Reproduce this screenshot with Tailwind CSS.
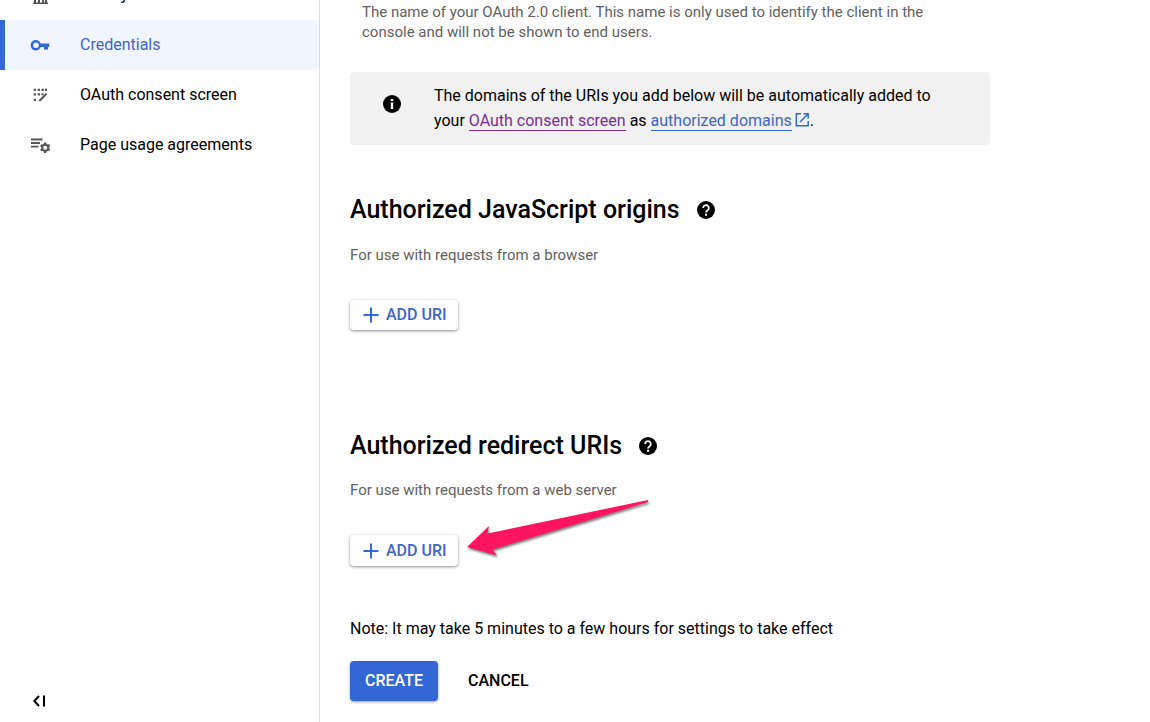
<!DOCTYPE html>
<html lang="en">
<head>
<meta charset="utf-8">
<meta name="viewport" content="width=device-width, initial-scale=1">
<title>Create OAuth client ID</title>
<script src="https://cdn.jsdelivr.net/npm/@tailwindcss/browser@4"></script>
</head>
<body class="flex h-screen overflow-hidden bg-white font-['Roboto',sans-serif] text-base text-black">
  <aside class="flex w-80 shrink-0 flex-col justify-between border-r border-[#dcdcdc]">
    <nav class="-mt-[30px] flex flex-col" aria-label="APIs and services">
      <a href="#" class="flex h-[50px] items-center gap-[30px] pl-[30px]">
        <svg class="size-5 fill-[#555]" viewBox="0 0 20 20"><path d="M10 1 2.500 5v2h15.500V5zM4 9h2v9H4zM8 9h2v9H8zM12 9h2v9h-2zM15 9h2v9h-2zM3 17.500h15V19H3z"/></svg>
        <span>Library</span>
      </a>
      <a href="#" aria-current="page" class="flex h-[50px] items-center gap-[30px] border-l-5 border-[#3367d6] bg-[#f0f5ff] pl-[25px] text-[#3f66c4]">
        <svg class="size-5 fill-[#3367d6]" viewBox="0 0 20 20"><path fill-rule="evenodd" d="M10.700 8.400H19.200v3.700h-1.200v2.400h-4v-2.400h-3.300a5.200 5.200 0 1 1 0-3.700zM6 7.400a2.800 2.800 0 1 0 0 5.600 2.800 2.800 0 0 0 0-5.600z"/></svg>
        <span>Credentials</span>
      </a>
      <a href="#" class="flex h-[50px] items-center gap-[30px] pl-[30px]">
        <svg class="size-5" viewBox="0 0 20 20"><path fill="#555" d="M3.700 3.700H6V6H3.700zM7.700 3.700H10V6H7.700zM11.500 3.700h2.300V6h-2.300zM14.900 3.700h2.100V6h-2.100zM3.700 8.300H6v2.300H3.700zM7.700 8.300H10v2.300H7.700zM11.500 8.300h2v2h-2zM3.700 13.700H6V16H3.700z"/><path d="M9.300 16 16.500 8.800" fill="none" stroke="#555" stroke-width="2"/></svg>
        <span>OAuth consent screen</span>
      </a>
      <a href="#" class="flex h-[50px] items-center gap-[30px] pl-[30px]">
        <svg class="size-5" viewBox="0 0 20 20" fill="none" stroke="#555"><path stroke-width="1.8" d="M1 4.500h11.500M1 8h9M1 11.700h7.500"/><circle cx="15.200" cy="12.700" r="3" stroke-width="2"/><path stroke-width="2.400" d="M15.200 7.500v2M15.200 15.900v2M10.700 10.100l1.700 1M18 14.300l1.700 1M10.700 15.300l1.700-1M18 11.100l1.700-1"/></svg>
        <span>Page usage agreements</span>
      </a>
    </nav>
    <button type="button" aria-label="Collapse menu" class="mb-[11px] ml-[30px] size-5">
      <svg class="size-5" viewBox="0 0 20 20" fill="none" stroke="#000" stroke-width="2"><path d="M9 5 4.3 10 9 15M14 4.5v11"/></svg>
    </button>
  </aside>

  <main class="min-w-0 flex-1 pl-[30px] pt-0.5">
    <p class="ml-3 max-w-[600px] text-[15px] leading-5 text-[#616161]">The name of your OAuth 2.0 client. This name is only used to identify the client in the console and will not be shown to end users.</p>

    <div class="mt-[30px] flex max-w-[640px] gap-8 rounded bg-[#f1f1f1] pb-3 pl-8 pr-10 pt-[11px]">
      <svg class="mt-[11px] size-5 shrink-0" viewBox="0 0 20 20"><circle cx="10" cy="10" r="9"/><path fill="#fff" d="M8.800 5h2.400v2H8.800zM8.800 8.500h2.400v6.500H8.800z"/></svg>
      <p class="leading-[25px]">The domains of the URIs you add below will be automatically added to your <a href="#" class="border-b border-[#7b2b9b] text-[#7b2b9b]">OAuth consent screen</a> as <a href="#" class="text-[#3f66c4]"><span class="border-b border-[#3367d6]">authorized domains</span> <svg class="-ml-0.5 -mt-1 inline size-4 align-middle" viewBox="0 0 16 16" fill="none" stroke="#3367d6" stroke-width="1.5"><path d="M7 1.8H2.3v11.9h11.9V9M9.5 1.8h4.7v4.7M14 2 6 10"/></svg></a>.</p>
    </div>

    <section>
      <div class="mt-[49px] flex items-center gap-4">
        <h2 class="text-[25px] leading-8 font-medium">Authorized JavaScript origins</h2>
        <button type="button" aria-label="Help on JavaScript origins"><svg class="size-5" viewBox="0 0 20 20"><circle cx="10" cy="10" r="9"/><path fill="none" stroke="#fff" stroke-width="1.8" d="M7.2 8a2.8 2.8 0 1 1 4.6 2.1C10.6 11 10 11.400 10 12.500"/><path fill="#fff" d="M9 13.700h2v2H9z"/></svg></button>
      </div>
      <p class="mt-[19px] text-[15px] leading-5 text-[#616161]">For use with requests from a browser</p>
      <button type="button" class="mt-[35px] flex h-[30px] items-center gap-1.5 rounded bg-white pl-3 pr-[11px] font-medium text-[#3f66c4] shadow-[0_1px_3px_rgba(0,0,0,0.45)]">
        <svg class="size-[18px]" viewBox="0 0 18 18" fill="none" stroke="#3367d6" stroke-width="2"><path d="M9 1.500v15M1.500 9h15"/></svg>ADD URI
      </button>
    </section>

    <section>
      <div class="mt-[100px] flex items-center gap-4">
        <h2 class="text-[25px] leading-8 font-medium">Authorized redirect URIs</h2>
        <button type="button" aria-label="Help on redirect URIs"><svg class="size-5" viewBox="0 0 20 20"><circle cx="10" cy="10" r="9"/><path fill="none" stroke="#fff" stroke-width="1.8" d="M7.2 8a2.8 2.8 0 1 1 4.6 2.1C10.600 11 10 11.400 10 12.500"/><path fill="#fff" d="M9 13.700h2v2H9z"/></svg></button>
      </div>
      <p class="mt-[18px] text-[15px] leading-5 text-[#616161]">For use with requests from a web server</p>
      <div class="relative mt-[35px] w-fit">
        <button type="button" class="flex h-[31px] items-center gap-1.5 rounded bg-white pl-3 pr-[11px] font-medium text-[#3f66c4] shadow-[0_1px_3px_rgba(0,0,0,0.45)]">
          <svg class="size-[18px]" viewBox="0 0 18 18" fill="none" stroke="#3367d6" stroke-width="2"><path d="M9 1.500v15M1.500 9h15"/></svg>ADD URI
        </button>
        <svg class="pointer-events-none absolute -top-[39px] left-[114px] h-[70px] w-[190px] drop-shadow-[1px_2px_1px_rgba(0,0,0,0.5)]" viewBox="0 0 190 70" fill="#ff1460"><path d="M3 51 25 30 23.500 37.500 184 4V6L28.500 53.500 33 59.500z"/></svg>
      </div>
    </section>

    <p class="mt-[51px] leading-6">Note: It may take 5 minutes to a few hours for settings to take effect</p>
    <div class="mt-5 flex gap-[15px]">
      <button type="submit" class="h-10 rounded bg-[#3367d6] px-[15px] font-medium text-white shadow-[0_1px_3px_rgba(0,0,0,0.4)]">CREATE</button>
      <button type="button" class="h-10 px-[15px] font-medium">CANCEL</button>
    </div>
  </main>
</body>
</html>
